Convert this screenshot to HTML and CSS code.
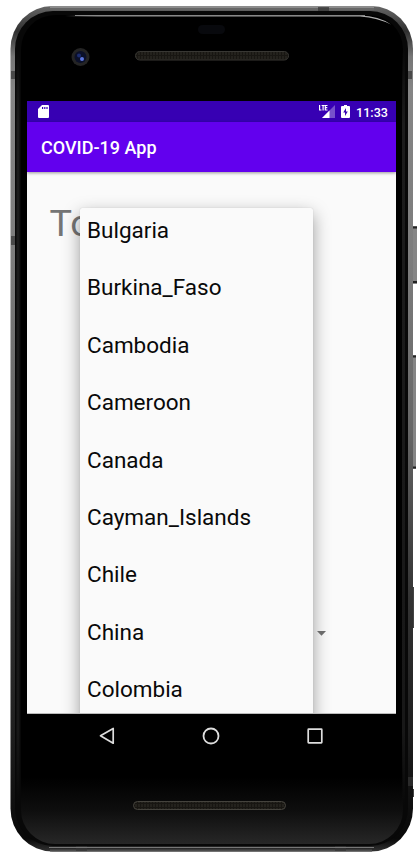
FILE: index.html
```html
<!DOCTYPE html>
<html lang="en">
<head>
<meta charset="utf-8">
<title>COVID-19 App</title>
<link rel="stylesheet" href="styles.css">
</head>
<body>
<div class="device">
  <svg class="frame" width="420" height="862" viewBox="0 0 420 862" aria-hidden="true">
    <defs>
      <linearGradient id="metal" x1="0" y1="0" x2="0" y2="1">
        <stop offset="0" stop-color="#666"/><stop offset=".03" stop-color="#303030"/><stop offset=".06" stop-color="#777"/><stop offset=".1" stop-color="#858585"/>
        <stop offset=".3" stop-color="#7c7c7c"/><stop offset=".5" stop-color="#666"/>
        <stop offset=".7" stop-color="#333"/><stop offset=".85" stop-color="#202020"/><stop offset=".985" stop-color="#080808"/><stop offset="1" stop-color="#333"/>
      </linearGradient>
      <linearGradient id="glass" x1="0" y1="0" x2="0" y2="1">
        <stop offset="0" stop-color="#000"/><stop offset=".92" stop-color="#000"/><stop offset=".96" stop-color="#0e0e0e"/><stop offset="1" stop-color="#272727"/>
      </linearGradient>
      <linearGradient id="shine" x1="0" x2="1"><stop offset="0" stop-color="#999" stop-opacity="0"/><stop offset=".1" stop-color="#888"/><stop offset=".95" stop-color="#aaa"/><stop offset="1" stop-color="#ccc"/></linearGradient>
      <linearGradient id="ridge" x1="0" y1="0" x2="0" y2="1"><stop offset="0" stop-color="#222" stop-opacity="0"/><stop offset=".1" stop-color="#1c1c1c"/><stop offset=".9" stop-color="#181818"/><stop offset="1" stop-color="#181818" stop-opacity="0"/></linearGradient>
      <pattern id="mesh" width="3" height="4" patternUnits="userSpaceOnUse"><rect width="3" height="4" fill="#181612"/><path d="M1 0v3" stroke="#302d27"/></pattern>
    </defs>
    <path d="M412 226h5v58h-5M412 355h4v114h-4" fill="#858585"/>
    <path d="M412 227.500h5M412 282h5M412 356.500h4M412 467.500h4" stroke="#222" stroke-width="2"/>
    <path d="M412 587h2v41h-2M412 789h2v8h-2" fill="#444"/>
    <rect x="10.500" y="6" width="402.500" height="845.500" rx="42" ry="43" fill="url(#metal)"/>
    <path d="M50 7H374" stroke="#8c8c8c" stroke-width="2"/>
    <path d="M50 9H374" stroke="#666" stroke-width="2"/>
    <path d="M50 850.500H372" stroke="#4c4c4c" stroke-width="2"/>
    <path d="M11 71h5v8h-5M407 71h5v8h-5M11 236h5v9h-5M318 7h11v5h-11M76 846h11v5h-11M335 846h11v5h-11M407 777h6v9h-6" fill="#333" fill-opacity=".7"/>
    <rect x="15" y="11" width="393" height="835" rx="38" fill="#080808"/>
    <rect x="21" y="15" width="382" height="829" rx="34" fill="url(#glass)"/>
    <rect x="16.500" y="50" width="3" height="755" fill="url(#ridge)"/>
    <rect x="402" y="50" width="3" height="755" fill="url(#ridge)"/>
    <path d="M65 15.500H360Q379 16 391 24.500Q378 18 360 16.500H65Z" fill="url(#shine)"/>
    <path d="M75 15.500H365" stroke="#888"/>
    <path d="M49 847.500H374" stroke="#777"/>
    <rect x="198" y="25" width="27" height="9" rx="4.500" fill="#08090d"/>
    <circle cx="80.500" cy="57" r="9" fill="#242424"/>
    <circle cx="80.500" cy="57" r="6" fill="#0b1029"/>
    <circle cx="79" cy="55.500" r="2" fill="#1c2c70"/>
    <circle cx="82" cy="59" r="2" fill="#5b75dd"/>
    <rect x="135.500" y="51.500" width="153" height="8.500" rx="4.200" fill="url(#mesh)" stroke="#383733"/>
    <rect x="133.500" y="801.500" width="152" height="8" rx="4" fill="url(#mesh)" stroke="#45433d"/>
  </svg>
  <main class="screen">
    <header class="status">
      <svg class="sd" width="11" height="13" viewBox="0 0 11 13"><path d="M4 0H10Q11 0 11 1V12Q11 13 10 13H1Q0 13 0 12V4Z" fill="#fff"/><path d="M4 2h1.200v2H4zm2.200 0h1.200v2H6.200zm2.200 0h1.200v2H8.400z" fill="#3700b3"/></svg>
      <div class="signals">
        <svg width="16" height="13" viewBox="0 0 16 13"><path d="M16 0V13H3Z" fill="#fff" fill-opacity=".32"/><path d="M10.500 5.500V13H3Z" fill="#fff"/><path d="M.6 0V5H2.500M2.600.5H5.600M4.100.5V5.500M8.500.5H6.300V5H8.500M6.300 2.700H8.300" fill="none" stroke="#fff" stroke-width="1.200"/></svg>
        <svg class="battery" width="9" height="13" viewBox="0 0 9 13"><path d="M3 0H6V1H8Q9 1 9 2V12Q9 13 8 13H1Q0 13 0 12V2Q0 1 1 1H3Z" fill="#fff"/><path d="M5 3L2.200 7.400H4V11L6.800 6.400H5Z" fill="#3700b3"/></svg>
        <span class="time">11:33</span>
      </div>
    </header>
    <div class="appbar">COVID-19 App</div>
    <section class="content">
      <h1 class="heading">Total</h1>
      <svg class="caret" width="9" height="5" viewBox="0 0 9 5"><path d="M0 0H9L4.500 4.700Z" fill="#6a6a6a"/></svg>
      <ul class="menu">
        <li>Bulgaria</li><li>Burkina_Faso</li><li>Cambodia</li><li>Cameroon</li><li>Canada</li><li>Cayman_Islands</li><li>Chile</li><li>China</li><li>Colombia</li>
      </ul>
    </section>
    <nav class="nav">
      <svg width="16" height="18" viewBox="0 0 16 18"><path d="M14.200 1.500V16.200L1.500 8.800Z" fill="none" stroke="#ddd" stroke-width="1.700" stroke-linejoin="round"/></svg>
      <svg width="18" height="18" viewBox="0 0 18 18"><circle cx="9" cy="9" r="7.500" fill="none" stroke="#ddd" stroke-width="1.800"/></svg>
      <svg width="16" height="16" viewBox="0 0 16 16"><rect x="1.200" y="1.200" width="13.600" height="13.600" rx=".5" fill="none" stroke="#ddd" stroke-width="1.700"/></svg>
    </nav>
  </main>
</div>
</body>
</html>
```
FILE: styles.css
```css
* { box-sizing: border-box; }
body { margin: 0; background: #fff; font-family: Roboto, sans-serif; overflow: hidden; }
svg { display: block; flex: none; }
.device { position: relative; width: 420px; height: 862px; padding: 101px 24px 0 27px; }
.frame { position: absolute; left: 0; top: 0; }
.screen { position: relative; width: 369px; }
.status { height: 21px; background: #3700b3; display: flex; align-items: center; justify-content: space-between; padding: 0 8px 0 11px; }
.signals { display: flex; align-items: center; }
.battery { margin-left: 6px; }
.time { color: #fff; font-size: 12.6px; font-weight: 500; line-height: 21px; margin: 1px 0 0 6px; }
.appbar { position: relative; z-index: 1; height: 50px; padding-left: 14px; background: #6200ee; color: #fff; font-size: 18px; font-weight: 500; line-height: 52px; box-shadow: 0 1px 3px rgba(0,0,0,.4); }
.content { position: relative; height: 542px; overflow: hidden; background: #fafafa; border-bottom: 1px solid #bbb; }
.heading { margin: 0; padding: 29px 0 0 22.5px; color: #757575; font-size: 37.7px; font-weight: 400; line-height: 44px; }
.caret { position: absolute; z-index: 2; left: 290px; top: 459px; }
.menu { position: absolute; left: 53px; top: 36px; width: 233px; height: 530px; margin: 0; padding: 0; list-style: none; background: #fafafa; border-radius: 2px; box-shadow: 0 6px 17px rgba(0,0,0,.38), 0 0 1px rgba(0,0,0,.2); }
.menu li { height: 57.4px; padding-left: 7px; margin: 0; color: #090909; font-size: 22.5px; line-height: 45px; white-space: nowrap; }
.nav { height: 43px; display: flex; align-items: center; justify-content: space-between; padding: 0 73px 0 72px; background: #000; }
```
